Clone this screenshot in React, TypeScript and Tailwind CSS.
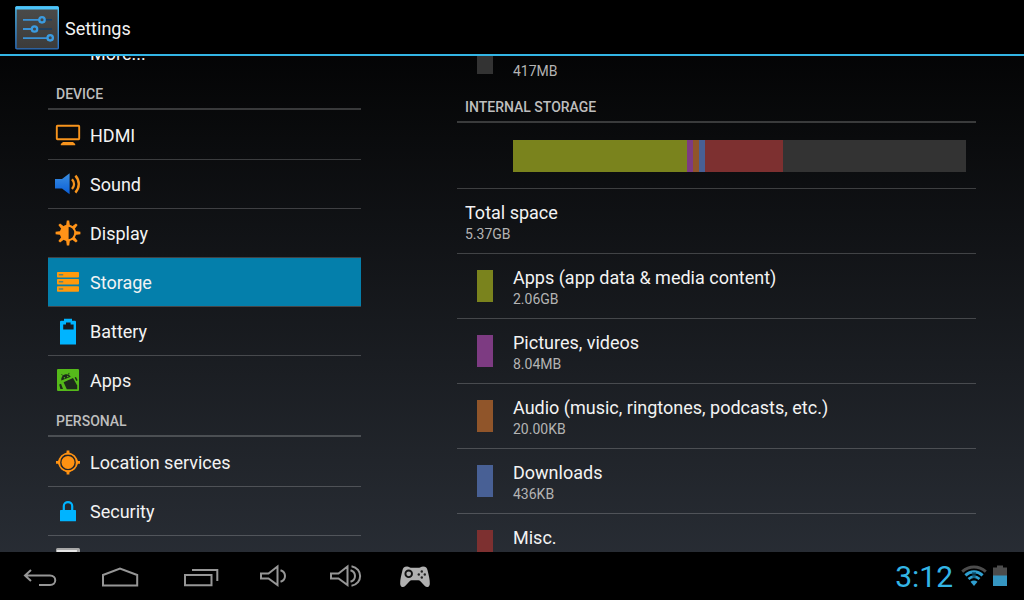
import React from "react";
import clsx from "clsx";

type NavItem = { label: string; icon?: React.ReactNode };

// Sidebar icons, all on a 28px grid
const Icon: React.FC<{ children: React.ReactNode }> = ({ children }) => (
  <svg width="28" height="28" viewBox="0 0 28 28" fill="none" className="shrink-0">
    {children}
  </svg>
);

const HdmiIcon = () => (
  <Icon>
    <rect x="2.8" y="4.8" width="22.4" height="13.4" rx="0.6" stroke="#f7941d" strokeWidth="1.9" />
    <path d="M9 21h10l2.2 2v1.3H6.8V23z" fill="#f7941d" />
  </Icon>
);

const SoundIcon = () => (
  <Icon>
    <defs>
      <linearGradient id="cone" x1="0" y1="0" x2="0" y2="1">
        <stop offset="0" stopColor="#3b8ee0" />
        <stop offset="1" stopColor="#0a5fd8" />
      </linearGradient>
    </defs>
    <path d="M1 9h7l7.6-5.8v21L8 18.6H1z" fill="url(#cone)" />
    <path d="M18 9.2c2.6 2.9 2.6 7 0 9.8M21.4 5.6c4.5 5 4.5 12 0 17" stroke="#f7941d" strokeWidth="2.4" />
  </Icon>
);

const DisplayIcon = () => (
  <Icon>
    {[0, 45, 90, 135, 180, 225, 270, 315].map((deg) => (
      <path key={deg} d="M12 7.4h4L15.2 1.6h-2.400z" fill="#ff9318" transform={`rotate(${deg} 14 14)`} />
    ))}
    <circle cx="14" cy="14" r="7.2" fill="#15171a" stroke="#ff9318" strokeWidth="2" />
    <path d="M14.6 6.2a7.8 7.8 0 1 0 0 15.6z" fill="#ff9318" />
  </Icon>
);

const StorageIcon = () => (
  <Icon>
    {[4, 11, 18.2].map((y) => (
      <g key={y}>
        <rect x="3" y={y} width="22" height="5.6" rx="0.8" fill="#ff9a0d" />
        <rect x="4.8" y={y + 2.2} width="4.4" height="1.2" fill="#3d7f86" />
      </g>
    ))}
  </Icon>
);

const BatteryIcon = () => (
  <Icon>
    <path
      d="M10 1.8h8v2h3.2l.8.8v23H6v-23l.8-.8H10zM12 5.4v2H9.2v5h10.4v-5h-3v-2z"
      fill="#00b4ff"
      fillRule="evenodd"
    />
  </Icon>
);

const AppsIcon = () => (
  <Icon>
    <rect x="3" y="3" width="22" height="22" rx="1" fill="#55b91a" />
    <g fill="#1d2a1c">
      <path d="M7.3 14.6c-.5-2.900 1.200-5.200 3.500-6 2.300-.8 4.700 0 5.900 2.200z" />
      <path d="M9.600 16.200 19 12l4.200 7.600v3.600H12.800z" />
      <path d="M20.600 11.400 22 10.900l1.600 3.300-1.200.9zM5.200 18.400l1.800-.6 2 5.200H6.400z" />
    </g>
    <path d="M8.700 9.600 7.600 8.200M14.600 8.600l.4-1.700" stroke="#1d2a1c" strokeWidth="0.9" />
    <circle cx="10.400" cy="11.700" r="0.700" fill="#55b91a" />
    <circle cx="13.700" cy="10.500" r="0.700" fill="#55b91a" />
  </Icon>
);

const LocationIcon = () => (
  <Icon>
    <circle cx="14" cy="14.4" r="6.5" fill="#ff9212" />
    <circle cx="14" cy="14.4" r="8.900" stroke="#ff9212" strokeWidth="1.7" />
    {[0, 90, 180, 270].map((deg) => (
      <path key={deg} d="M9.800 6.6 12.600 4.400V2.400h2.800v2l2.800 2.200z" fill="#ff9212" transform={`rotate(${deg} 14 14.4)`} />
    ))}
  </Icon>
);

const LockIcon = () => (
  <Icon>
    <path d="M9.800 14V9c0-5.200 8.400-5.200 8.400 0v5" stroke="#00b4ff" strokeWidth="2.2" />
    <rect x="6" y="13" width="16" height="11.3" rx="0.6" fill="#00b4ff" />
  </Icon>
);

const LanguageIcon = () => (
  <Icon>
    <rect x="2" y="2" width="24" height="24" rx="1.5" fill="#a8a8a8" />
    <path d="M3 4h20l-2 20H3z" fill="#e4e4e4" />
  </Icon>
);

const sections: { title?: string; items: NavItem[] }[] = [
  { items: [{ label: "More..." }] },
  {
    title: "DEVICE",
    items: [
      { label: "HDMI", icon: <HdmiIcon /> },
      { label: "Sound", icon: <SoundIcon /> },
      { label: "Display", icon: <DisplayIcon /> },
      { label: "Storage", icon: <StorageIcon /> },
      { label: "Battery", icon: <BatteryIcon /> },
      { label: "Apps", icon: <AppsIcon /> },
    ],
  },
  {
    title: "PERSONAL",
    items: [
      { label: "Location services", icon: <LocationIcon /> },
      { label: "Security", icon: <LockIcon /> },
      { label: "", icon: <LanguageIcon /> },
    ],
  },
];

const usage = [
  { label: "Apps (app data & media content)", size: "2.06GB", share: 174, color: "bg-[#7a831d]" },
  { label: "Pictures, videos", size: "8.04MB", share: 6, color: "bg-[#7d3b82]" },
  { label: "Audio (music, ringtones, podcasts, etc.)", size: "20.00KB", share: 6, color: "bg-[#90552a]" },
  { label: "Downloads", size: "436KB", share: 6, color: "bg-[#486095]" },
  { label: "Misc.", share: 78, color: "bg-[#7d3030]" },
];

const SectionTitle: React.FC<{ children: React.ReactNode }> = ({ children }) => (
  <h2 className="mb-px flex h-8 items-center border-b-2 border-white/20 px-2 pt-0.5 text-[14px] font-medium text-[#bebebe]">
    {children}
  </h2>
);

type RowProps = { label: string; size?: string; color?: string; last?: boolean };

const StorageRow: React.FC<RowProps> = ({ label, size, color, last }) => (
  <li className={clsx("flex h-[65px] items-center border-b px-2", last ? "border-transparent" : "border-white/20")}>
    {color && <span className={clsx("mr-5 ml-3 h-8 w-4 shrink-0", color)} />}
    <div className="pt-0.5">
      <p className="text-[18px] leading-[25px] text-[#f3f3f3]">{label}</p>
      <p className="h-[19px] text-[14px] leading-[19px] text-[#b4b4b4]">{size}</p>
    </div>
  </li>
);

const SettingsLogo = () => (
  <svg width="44" height="44" viewBox="0 0 44 44" fill="none">
    <defs>
      <linearGradient id="plate" x1="0" y1="0" x2="0" y2="1">
        <stop offset="0" stopColor="#4b4b4a" />
        <stop offset="1" stopColor="#3c3b3a" />
      </linearGradient>
      <linearGradient id="rim" x1="0" y1="0" x2="0" y2="1">
        <stop offset="0" stopColor="#4fc3f7" />
        <stop offset="1" stopColor="#2a6fc0" />
      </linearGradient>
    </defs>
    <rect x="0.9" y="0.9" width="42.4" height="42" rx="1" fill="url(#plate)" stroke="url(#rim)" strokeWidth="1.4" />
    <rect x="0.5" y="0.2" width="43" height="3.2" rx="1" fill="#4cc4fa" />
    <path d="M30 13.800h7M22 23h15" stroke="#173f66" strokeWidth="1.5" />
    <path d="M8 13.800h16M8 23h8M8 32.200h24" stroke="#3a93d8" strokeWidth="1.8" />
    {[
      [27, 13.8],
      [19.5, 23],
      [35.2, 31.8],
    ].map(([cx, cy]) => (
      <circle key={cx} cx={cx} cy={cy} r="2.7" fill="#454545" stroke="#3a9be0" strokeWidth="2.3" />
    ))}
  </svg>
);

const keys = [
  {
    name: "Back",
    width: "w-20",
    drawing: <path d="m11 12-6 5.500 6 5.500M5 17.500h25c7 0 7 9.500 0 9.500H19" />,
  },
  {
    name: "Home",
    width: "w-20",
    drawing: <path d="M3 17 20 10.600 37.200 17v10.400H3z" />,
  },
  {
    name: "Recent apps",
    width: "w-20",
    drawing: <path d="M5 17h26.500v10.300H5zM12 12h25.300v11" />,
  },
  {
    name: "Volume down",
    width: "w-[70px]",
    drawing: <path d="M6 14.500h7.500l9-7v18.500l-9-6.500H6zM25.500 11.200c6 2 6 9.600 0 11.600" transform="translate(0 1)" />,
  },
  {
    name: "Volume up",
    width: "w-[70px]",
    drawing: (
      <path
        d="M6 14.500h7.500l9-7v18.500l-9-6.500H6zM25.500 11.200c6 2 6 9.600 0 11.600M26.500 7.300c11.500 2 11.500 17.500 0 19.500"
        transform="translate(0 1)"
      />
    ),
  },
];

const Gamepad = () => (
  <svg width="40" height="36" viewBox="0 0 40 36" fill="none">
    <path
      d="M12 8.500c-3 0-4 1.500-4.600 4C6.300 17 5 22 5.200 26c.2 3.400 3.200 4 5.200 1.800l4.200-4.600c.6-.6 1.200-.9 2-.9h6.800c.8 0 1.400.3 2 .9l4.200 4.600c2 2.200 5 1.600 5.200-1.800.2-4-1.100-9-2.200-13.500-.6-2.500-1.600-4-4.600-4-1.700 0-2.400 1.200-3.800 1.200h-8.400c-1.400 0-2.100-1.200-3.600-1.200z"
      fill="#b0b0b0"
    />
    <circle cx="13.700" cy="15.800" r="3.300" stroke="#111" strokeWidth="1.9" />
    <circle cx="26.800" cy="13.500" r="1.200" fill="#222" />
    <circle cx="26.800" cy="19.500" r="1.200" fill="#222" />
    <circle cx="23.800" cy="16.500" r="1.200" fill="#222" />
    <circle cx="29.800" cy="16.500" r="1.200" fill="#222" />
  </svg>
);

const WifiIcon = () => (
  <svg width="26" height="22" viewBox="0 0 26 22" fill="none">
    <path d="M1.200 6.600c7.200-6 16.400-6 23.600 0" stroke="#4c4c4c" strokeWidth="3" />
    <path d="M4.400 10.300c5.200-4.600 12-4.600 17.200 0" stroke="#2f9fd0" strokeWidth="3" />
    <path d="M7.500 14c3.500-3 7.500-3 11 0" stroke="#2f9fd0" strokeWidth="2.8" />
    <path d="m13 21-3.500-4.300c2.200-1.600 4.800-1.600 7 0z" fill="#2f9fd0" />
    <path d="M11 7h4l-.5 6h-3z" fill="#0b4a68" opacity="0.7" />
  </svg>
);

const StatusBattery = () => (
  <svg width="14" height="22" viewBox="0 0 14 22">
    <path d="M4 0.600h6v2h4v8.400H0V2.600h4z" fill="#4c4c4c" />
    <rect y="10.500" width="14" height="10.500" fill="#3596c2" />
  </svg>
);

const App: React.FC = () => {
  const [active, setActive] = React.useState("Storage");

  return (
    <div className="flex h-screen flex-col bg-linear-to-b/srgb from-black to-[#2b3038] font-[Roboto,sans-serif] text-[#f3f3f3]">
      <header className="z-10 flex h-14 shrink-0 items-center gap-1.5 border-b-2 border-[#33b5e5] bg-black px-[15px] pt-0.5">
        <SettingsLogo />
        <h1 className="text-[18px]">Settings</h1>
      </header>

      <main className="grid min-h-0 flex-1 grid-cols-[313fr_519fr] gap-24 overflow-hidden px-12">
        {/* both lists are scrolled part way down */}
        <nav className="-mt-[27px]">
          {sections.map(({ title, items }, s) => (
            <section key={s}>
              {title && <SectionTitle>{title}</SectionTitle>}
              <ul>
                {items.map(({ label, icon }, i) => (
                  <li
                    key={label}
                    className={clsx("border-b", i < items.length - 1 ? "border-white/20" : "border-transparent")}
                  >
                    <a
                      href="#"
                      onClick={() => setActive(label)}
                      className={clsx(
                        "flex h-12 items-center gap-2 pr-2 pl-1.5 text-[18px]",
                        active === label && "bg-[#047fab]",
                      )}
                    >
                      {icon ?? <span className="w-7" />}
                      {label}
                    </a>
                  </li>
                ))}
              </ul>
            </section>
          ))}
        </nav>

        <section className="-mt-[30px]">
          <ul>
            <StorageRow label="Available" size="417MB" color="bg-[#333333]" last />
          </ul>
          <SectionTitle>INTERNAL STORAGE</SectionTitle>
          <div className="border-b border-white/20 py-4 pr-2.5 pl-14">
            <div className="flex h-8 bg-[#333333]">
              {usage.map(({ label, share, color }) => (
                <div key={label} className={color} style={{ width: `${(share / 453) * 100}%` }} />
              ))}
            </div>
          </div>
          <ul>
            <StorageRow label="Total space" size="5.37GB" />
            {usage.map(({ label, size, color }) => (
              <StorageRow key={label} label={label} size={size} color={color} />
            ))}
          </ul>
        </section>
      </main>

      <footer className="z-10 flex h-12 shrink-0 items-center bg-black pr-[17px]">
        {keys.map(({ name, width, drawing }) => (
          <button key={name} aria-label={name} className={clsx("flex h-12 items-center justify-center", width)}>
            <svg width="40" height="36" viewBox="0 0 40 36" fill="none" stroke="#969696" strokeWidth="2">
              {drawing}
            </svg>
          </button>
        ))}
        <button aria-label="Game controls" className="flex h-12 w-[70px] items-center justify-center">
          <Gamepad />
        </button>
        <div className="ml-auto flex items-center">
          <time className="mr-2 pt-0.5 text-[30px] leading-9 text-[#33b5e5]">3:12</time>
          <WifiIcon />
          <span className="ml-1.5">
            <StatusBattery />
          </span>
        </div>
      </footer>
    </div>
  );
};

export default App;
